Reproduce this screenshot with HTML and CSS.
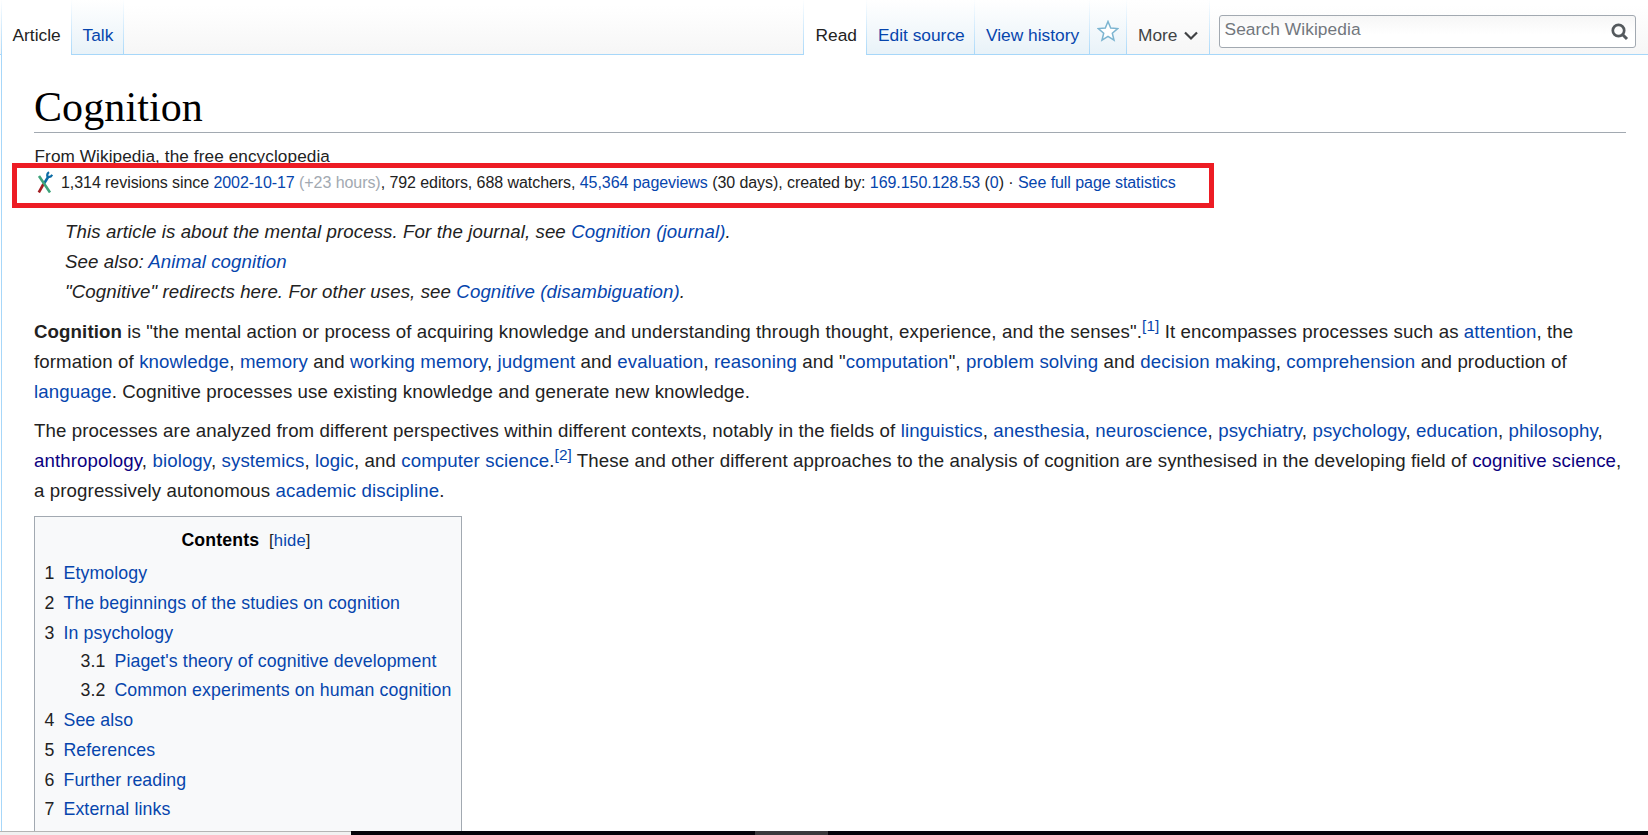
FILE: index.html
```html
<!DOCTYPE html>
<html lang="en">
<head>
<meta charset="utf-8">
<title>Cognition - Wikipedia</title>
<link rel="stylesheet" href="styles.css">
</head>
<body>
<div class="page">
  <header class="head">
    <nav class="tabs">
      <a class="tab selected article">Article</a>
      <a class="tab talk">Talk</a>
    </nav>
    <nav class="tabs views">
      <a class="tab selected read">Read</a>
      <a class="tab edit">Edit source</a>
      <a class="tab history">View history</a>
      <a class="tab watch"><svg width="22" height="22" viewBox="0 0 22 22"><path d="M11 1.5l2.7 6.6 7 .5-5.4 4.6 1.7 6.9-6-3.8-6 3.8 1.7-6.9L1.300 8.600l7-.5z" fill="#fff" stroke="#7cb5d1" stroke-width="1.5"/></svg></a>
      <a class="tab more">More <svg width="14" height="10" viewBox="0 0 14 10"><path d="M1 1.500l6 6 6-6" fill="none" stroke="#404244" stroke-width="2.200"/></svg></a>
    </nav>
    <div class="search"><span>Search Wikipedia</span><svg width="18" height="18" viewBox="0 0 18 18"><circle cx="7.500" cy="7.500" r="5.700" fill="none" stroke="#54595d" stroke-width="2.700"/><path d="M11 11l5 5" stroke="#54595d" stroke-width="3"/></svg></div>
  </header>
  <main class="content">
    <h1>Cognition</h1>
    <div class="sub">From Wikipedia, the free encyclopedia</div>
    <div class="stats"><svg width="16" height="22" viewBox="0 0 16 22"><path d="M6.500 13L1.800 21.500" stroke="#a31d22" stroke-width="2.600"/><path d="M11.500 5.500L7 12.500" stroke="#0b6ba5" stroke-width="2.600"/><path d="M2 5L13 21.500" stroke="#3fa37b" stroke-width="2.600"/><path d="M12 1.200Q9.500 3 10.500 5.500Q13.500 7 15.200 3.800" fill="none" stroke="#0b6ba5" stroke-width="2.200"/></svg><span>1,314 revisions since <a>2002-10-17</a> <i>(+23 hours)</i>, 792 editors, 688 watchers, <a>45,364 pageviews</a> (30 days), created by: <a>169.150.128.53</a> (<a>0</a>) · <a>See full page statistics</a></span></div>
    <div class="hatnotes">
      <div>This article is about the mental process. For the journal, see <a>Cognition (journal)</a>.</div>
      <div>See also: <a>Animal cognition</a></div>
      <div>"Cognitive" redirects here. For other uses, see <a>Cognitive (disambiguation)</a>.</div>
    </div>
    <p><b>Cognition</b> is "the mental action or process of acquiring knowledge and understanding through thought, experience, and the senses".<sup><a>[1]</a></sup> It encompasses processes such as <a>attention</a>, the<br>
    formation of <a>knowledge</a>, <a>memory</a> and <a>working memory</a>, <a>judgment</a> and <a>evaluation</a>, <a>reasoning</a> and "<a>computation</a>", <a>problem solving</a> and <a>decision making</a>, <a>comprehension</a> and production of<br>
    <a>language</a>. Cognitive processes use existing knowledge and generate new knowledge.</p>
    <p>The processes are analyzed from different perspectives within different contexts, notably in the fields of <a>linguistics</a>, <a>anesthesia</a>, <a>neuroscience</a>, <a>psychiatry</a>, <a>psychology</a>, <a>education</a>, <a>philosophy</a>,<br>
    <a class="visited">anthropology</a>, <a>biology</a>, <a>systemics</a>, <a>logic</a>, and <a>computer science</a>.<sup><a>[2]</a></sup> These and other different approaches to the analysis of cognition are synthesised in the developing field of <a class="visited">cognitive science</a>,<br>
    a progressively autonomous <a>academic discipline</a>.</p>
    <div class="toc">
      <div class="toc-title"><b>Contents</b><span>[<a>hide</a>]</span></div>
      <ul>
        <li><span>1</span><a>Etymology</a></li>
        <li><span>2</span><a>The beginnings of the studies on cognition</a></li>
        <li class="tight"><span>3</span><a>In psychology</a></li>
        <li class="nested"><span>3.1</span><a>Piaget's theory of cognitive development</a></li>
        <li class="nested"><span>3.2</span><a>Common experiments on human cognition</a></li>
        <li><span>4</span><a>See also</a></li>
        <li><span>5</span><a>References</a></li>
        <li class="tight"><span>6</span><a>Further reading</a></li>
        <li><span>7</span><a>External links</a></li>
      </ul>
    </div>
  </main>
  <footer class="bottom"><div class="status"></div><div class="active"></div></footer>
  <div class="highlight"></div>
</div>
</body>
</html>
```
FILE: styles.css
```css
* { box-sizing: border-box; }
body { margin: 0; background: #fff; color: #222; font-family: "Liberation Sans", Arial, sans-serif; }
a { color: #0645ad; text-decoration: none; }
svg { display: block; flex: none; }
.page { position: relative; width: 1648px; height: 835px; overflow: hidden; display: flex; flex-direction: column; white-space: nowrap; }

.head {
  height: 55px; flex: none; display: flex; padding-left: 1px;
  background: linear-gradient(#a7d7f9, #a7d7f9) 0 100% / 100% 1px no-repeat, linear-gradient(#fff 0, #fff 10%, #f6f6f6 100%);
}
.tabs { display: flex; }
.tab {
  height: 55px; padding: 25px 0 0 11px; font-size: 17.33px; line-height: 20px;
  border-style: solid; border-image: linear-gradient(#fff, #a7d7f9) 1;
  border-width: 0 1px 0 0;
  background: linear-gradient(#a7d7f9, #a7d7f9) 0 100% / 100% 1px no-repeat, linear-gradient(#fff, #e8f2f8);
}
.tab.selected { background: #fff; color: #222; }
.article { width: 71px; border-width: 0 1px 0 1px; padding-left: 10.5px; }
.talk { width: 52px; padding-left: 10.5px; }
.views { margin-left: 679px; }
.read { width: 64px; border-width: 0 1px 0 1px; padding-left: 11.5px; }
.edit { width: 108px; }
.history { width: 115px; }
.watch { width: 37px; padding: 20px 0 0 7px; }
.more { width: 83px; color: #404244; display: flex; gap: 7px; background: linear-gradient(#a7d7f9, #a7d7f9) 0 100% / 100% 1px no-repeat, linear-gradient(#fff, #f6f6f6); }
.more svg { margin-top: 6px; }
.search {
  width: 417px; height: 33px; margin: 15px 0 0 9px; padding: 0 6px 0 4.5px; display: flex; justify-content: space-between;
  border: 1px solid #a2a9b1; border-radius: 3px; background: linear-gradient(#f6f6f6, #fff 60%);
  font-size: 17.33px; line-height: 27px; letter-spacing: .08px; color: #72777d;
}
.search svg { margin-top: 7px; }

.content { flex: 1; min-height: 0; overflow: hidden; margin-left: 1px; border-left: 1px solid #a7d7f9; padding: 29px 22px 0 32px; }
h1 { margin: 0; height: 49px; border-bottom: 1px solid #a2a9b1; color: #000; font: 42px/46px "Liberation Serif", Georgia, serif; letter-spacing: .1px; }
.sub { margin-top: 12px; height: 22px; font-size: 17.17px; line-height: 22px; letter-spacing: .1px; padding-left: .5px; }
.stats { display: flex; gap: 8px; height: 24px; padding-left: 3px; font-size: 16px; line-height: 24px; margin-top: 4px; letter-spacing: -.064px; }
.stats i { font-style: normal; color: #a2a9b1; }
.hatnotes { margin: 22px 0 0 31px; font-style: italic; font-size: 18.67px; line-height: 30px; letter-spacing: .1px; }
p { margin: 10px 0 0; font-size: 18.67px; line-height: 30px; letter-spacing: .11px; }
p + p { margin-top: 9px; }
sup { font-size: 82%; line-height: 1; vertical-align: super; }
.visited { color: #0b0080; }

.toc { width: 428px; height: 340px; margin-top: 10px; border: 1px solid #a2a9b1; background: #f8f9fa; padding: 9px 9.5px; font-size: 17.73px; letter-spacing: .11px; }
.toc-title { display: flex; justify-content: center; gap: 10px; height: 32px; line-height: 28px; padding-right: 4px; color: #000; }
.toc-title span { font-size: 16.67px; color: #222; line-height: 29px; }
ul { list-style: none; margin: 0; padding: 0; }
li { height: 30px; line-height: 30px; display: flex; gap: 9px; }
.tight { height: 29px; }
.nested { height: 29px; line-height: 28px; padding-left: 36px; }

.bottom { height: 4px; flex: none; display: flex; background: #05030a; }
.status { width: 351px; background: #f1f1f1; border-top: 1px solid #b4b4b4; }
.active { width: 73px; margin-left: 404px; background: #3b393c; }
.highlight { position: absolute; left: 12px; top: 163px; width: 1202px; height: 45px; border: 5px solid #ed1c24; }
```
